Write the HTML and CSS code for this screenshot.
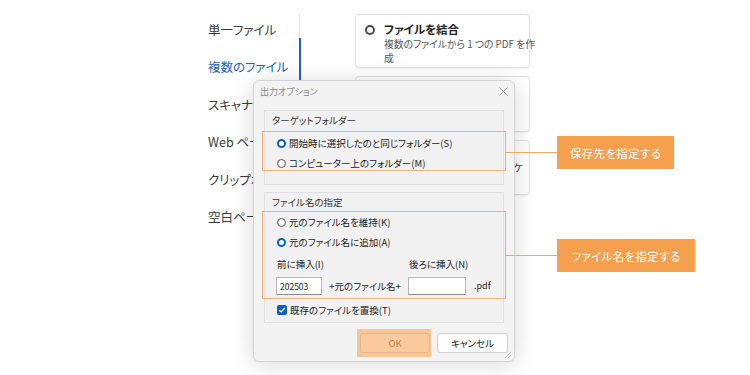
FILE: index.html
```html
<!DOCTYPE html>
<html lang="ja">
<head>
<meta charset="utf-8">
<title>出力オプション</title>
<link rel="stylesheet" href="styles.css">
</head>
<body>
<div class="app">
  <nav class="nav">
    <div class="nav-item">単一ファイル</div>
    <div class="nav-item active">複数のファイル</div>
    <div class="nav-item">スキャナーから</div>
    <div class="nav-item">Web ページ</div>
    <div class="nav-item">クリップボード</div>
    <div class="nav-item">空白ページ</div>
  </nav>
  <main class="content">
    <div class="card card1">
      <span class="cradio"></span>
      <div class="ctext">
        <div class="ctitle">ファイルを結合</div>
        <div class="csub">複数のファイルから 1 つの PDF を作<br>成</div>
      </div>
    </div>
    <div class="card card2"></div>
    <div class="card card3"><span class="tail">ポートフォリオにパッケ</span></div>
  </main>
</div>

<div class="dialog">
  <div class="titlebar">
    <span class="title">出力オプション</span>
    <svg class="close" width="9" height="9" viewBox="0 0 9 9"><path d="M0.5 0.5L8.5 8.5M8.5 0.5L0.5 8.5" stroke="#8a8a8a" stroke-width="0.9" fill="none"/></svg>
  </div>
  <div class="dbody">
    <div class="group g1">
      <div class="glabel">ターゲットフォルダー</div>
      <div class="opt first"><span class="radio on"></span>開始時に選択したのと同じフォルダー(S)</div>
      <div class="opt"><span class="radio"></span>コンピューター上のフォルダー(M)</div>
    </div>
    <div class="group g2">
      <div class="glabel">ファイル名の指定</div>
      <div class="opt first"><span class="radio"></span>元のファイル名を維持(K)</div>
      <div class="opt"><span class="radio on"></span>元のファイル名に追加(A)</div>
      <div class="insert">
        <div class="icol c1">
          <div class="ilabel">前に挿入(I)</div>
          <div class="input">202503</div>
        </div>
        <div class="plus">+元のファイル名+</div>
        <div class="icol c2">
          <div class="ilabel">後ろに挿入(N)</div>
          <div class="input"></div>
        </div>
        <div class="ext">.pdf</div>
      </div>
      <div class="opt check"><span class="cb"><svg width="8" height="8" viewBox="0 0 8 8"><path d="M1.2 4.2L3.2 6L6.8 2" stroke="#fff" stroke-width="1.2" fill="none"/></svg></span>既存のファイルを置換(T)</div>
    </div>
    <div class="buttons">
      <div class="btn ok">OK</div>
      <div class="btn">キャンセル</div>
    </div>
  </div>
  <svg class="grip" width="8" height="8" viewBox="0 0 8 8"><path d="M7 1L1 7M7 4L4 7" stroke="#b5b5b5" stroke-width="0.8"/></svg>
</div>

<div class="hl box1"></div>
<div class="hl box2"></div>
<div class="hl okhl"></div>
<div class="line line1"></div>
<div class="line line2"></div>
<div class="tag tag1">保存先を指定する</div>
<div class="tag tag2">ファイル名を指定する</div>
</body>
</html>
```

FILE: styles.css
```css
* { box-sizing: border-box; }
html, body { margin: 0; padding: 0; }
body {
  width: 750px;
  height: 375px;
  overflow: hidden;
  position: relative;
  background: #fff;
  font-family: "Noto Sans CJK JP", "Noto Sans", sans-serif;
  font-feature-settings: "palt";
  color: #333;
}

.app {
  display: flex;
  padding-left: 208px;
  padding-top: 11px;
}

.nav {
  width: 92px;
  border-right: 1px solid #e4e4e4;
  margin-top: 3px;
  height: 330px;
}
.nav-item {
  position: relative;
  height: 37.4px;
  line-height: 37.4px;
  font-size: 12.5px;
  color: #3a3a3a;
  white-space: nowrap;
  margin-top: -3px;
  margin-bottom: 3px;
}
.nav-item.active { color: #1c64c4; }
.nav-item.active::after {
  content: "";
  position: absolute;
  right: -2px;
  top: -10px;
  width: 2px;
  height: 60px;
  background: #1c64c4;
}

.content {
  margin-left: 55px;
  padding-top: 3px;
  display: flex;
  flex-direction: column;
  gap: 8px;
}
.card {
  width: 175px;
  background: #fff;
  border: 1px solid #e2e2e2;
  border-radius: 4px;
  box-shadow: 0 1px 2px rgba(0,0,0,0.06);
}
.card1 {
  display: flex;
  height: 54px;
  padding: 6px 6px 0 9px;
}
.cradio {
  width: 10px;
  height: 10px;
  border: 2px solid #4a4a4a;
  border-radius: 50%;
  margin-top: 4px;
  flex: none;
}
.ctext { margin-left: 9px; }
.ctitle {
  font-size: 11.5px;
  font-weight: bold;
  line-height: 16px;
  color: #222;
}
.csub {
  font-size: 9.8px;
  line-height: 14px;
  color: #555;
  white-space: nowrap;
}
.card2 { height: 56px; }
.card3 {
  height: 55px;
  display: flex;
  align-items: center;
  justify-content: flex-end;
  padding-right: 6px;
  font-size: 10.5px;
  color: #444;
  overflow: hidden;
}
.tail { white-space: nowrap; }

/* dialog */
.dialog {
  position: absolute;
  left: 253px;
  top: 80px;
  width: 262px;
  height: 282px;
  background: #f3f3f3;
  border: 1px solid #d4d4d4;
  border-radius: 6px;
  box-shadow: 0 2px 22px rgba(0,0,0,0.16);
  font-size: 9.5px;
  color: #222;
}
.titlebar {
  height: 21px;
  display: flex;
  align-items: center;
  justify-content: space-between;
  padding: 0 7px 0 6px;
}
.title { font-size: 9px; color: #8a8a8a; }
.close { margin-right: -1px; }
.dbody {
  padding: 8px 10px 0 10px;
  display: flex;
  flex-direction: column;
}
.group {
  border: 1px solid #e0e0e0;
  padding: 2px 7px 0 7px;
  background: #f1f1f1;
}
.g1 { height: 75px; }
.g2 { height: 131px; margin-top: 7px; }
.glabel {
  line-height: 14px;
  font-size: 9.5px;
  color: #333;
}
.opt {
  display: flex;
  align-items: center;
  height: 20px;
  margin-left: 5px;
  white-space: nowrap;
}
.g1 .opt.first { margin-top: 6px; }
.g2 .opt.first { margin-top: 3px; }
.radio {
  width: 9px;
  height: 9px;
  border: 1px solid #555;
  border-radius: 50%;
  margin-right: 3px;
  flex: none;
  background: #fdfdfd;
}
.radio.on {
  border: 2.5px solid #0a5fc2;
  background: #fff;
}
.insert {
  display: flex;
  align-items: flex-end;
  margin-left: 4px;
  margin-top: 5px;
}
.icol { display: flex; flex-direction: column; }
.c1 { width: 46px; }
.c2 { width: 58px; }
.ilabel { line-height: 14px; margin-left: 1px; white-space: nowrap; }
.input {
  margin-top: 6px;
  height: 18px;
  background: #fff;
  border: 1px solid #b8b8b8;
  border-bottom-color: #8a8a8a;
  font-size: 8.5px;
  line-height: 16px;
  padding-left: 3px;
  color: #222;
}
.plus {
  width: 86px;
  text-align: center;
  line-height: 18px;
  white-space: nowrap;
}
.ext {
  margin-left: 8px;
  line-height: 18px;
  font-size: 9px;
}
.opt.check { margin-top: 5px; }
.cb {
  width: 10px;
  height: 10px;
  border-radius: 2px;
  background: #0a5fc2;
  margin-right: 3px;
  display: flex;
  align-items: center;
  justify-content: center;
  flex: none;
}
.buttons {
  display: flex;
  justify-content: flex-end;
  gap: 7px;
  margin-top: 10px;
  margin-right: -4px;
}
.btn {
  width: 71px;
  height: 20px;
  background: #fdfdfd;
  border: 1px solid #cfcfcf;
  border-radius: 3px;
  text-align: center;
  line-height: 18px;
  font-size: 9.5px;
  color: #222;
}
.btn.ok { width: 70px; color: #6a5a4a; }
.grip { position: absolute; right: 2px; bottom: 2px; }

/* annotations */
.hl { position: absolute; }
.box1, .box2 {
  left: 262px;
  width: 244px;
  border: 1px solid #f3b072;
}
.box1 { top: 131px; height: 40px; }
.box2 { top: 211px; height: 88px; }
.okhl {
  left: 357px;
  top: 329px;
  width: 74px;
  height: 28px;
  background: rgba(247, 160, 77, 0.55);
}
.line {
  position: absolute;
  left: 506px;
  width: 51px;
  height: 1px;
  background: #f3a965;
}
.line1 { top: 152px; }
.line2 { top: 255px; }
.tag {
  position: absolute;
  left: 557px;
  height: 33px;
  background: #f6a04d;
  color: #fff;
  font-size: 11.5px;
  display: flex;
  align-items: center;
  justify-content: center;
  letter-spacing: 0.3px;
}
.tag1 { top: 136px; width: 117px; }
.tag2 { top: 239px; width: 138px; }
```
